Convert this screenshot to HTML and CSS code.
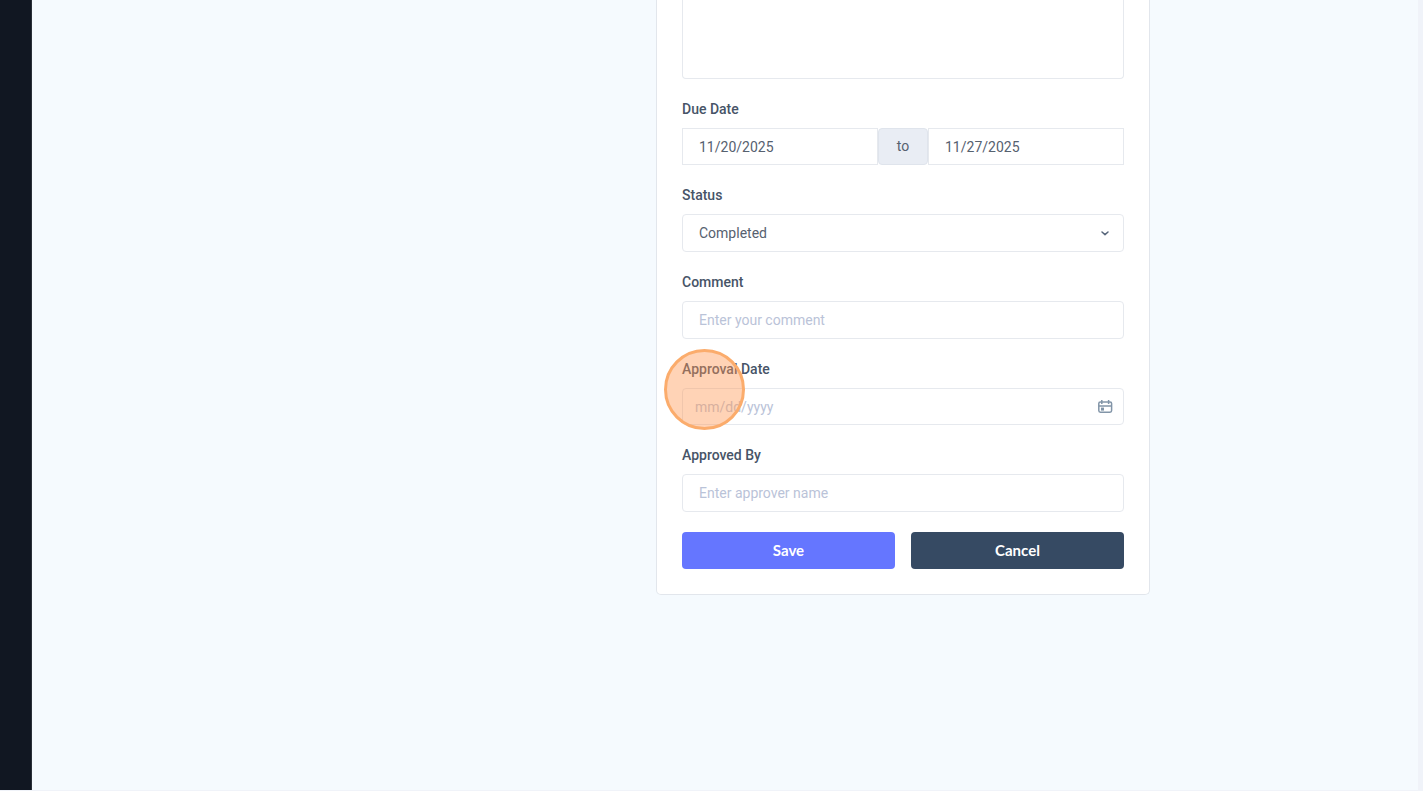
FILE: index.html
```html
<!DOCTYPE html>
<html lang="en">
<head>
  <meta charset="UTF-8">
  <meta name="viewport" content="width=device-width, initial-scale=1">
  <title>Edit Task</title>
  <link rel="stylesheet" href="styles.css">
</head>
<body>
  <div class="layout">
    <aside class="sidebar"></aside>

    <main class="content">
      <form class="card">
        <textarea class="control description" aria-label="Description"></textarea>

        <div class="field">
          <label for="startDate">Due Date</label>
          <div class="date-range">
            <input class="control" type="text" id="startDate" value="11/20/2025">
            <span class="range-text">to</span>
            <input class="control" type="text" id="endDate" value="11/27/2025" aria-label="End date">
          </div>
        </div>

        <div class="field">
          <label for="status">Status</label>
          <div class="control-wrap">
            <select class="control tall" id="status">
              <option>Completed</option>
            </select>
            <svg class="icon" viewBox="0 0 16 16" fill="none" stroke="#56657a" stroke-width="1.5" stroke-linecap="round" stroke-linejoin="round">
              <path d="M5 7l3 2.6L11 7"/>
            </svg>
          </div>
        </div>

        <div class="field">
          <label for="comment">Comment</label>
          <input class="control tall" type="text" id="comment" placeholder="Enter your comment">
        </div>

        <div class="field highlighted">
          <label for="approvalDate">Approval Date</label>
          <div class="control-wrap">
            <input class="control date-input" type="text" id="approvalDate" placeholder="mm/dd/yyyy">
            <svg class="icon" viewBox="0 0 16 16" fill="none" stroke="#8295a8" stroke-width="1.5" stroke-linejoin="round">
              <rect x="1.8" y="3" width="12.8" height="10.2" rx="1.6"/>
              <path d="M1.8 7h12.8M4.8 1v4M11.6 1v4"/>
              <rect x="4" y="8.6" width="3" height="3" fill="#8295a8" stroke="none"/>
            </svg>
          </div>
          <span class="click-marker"></span>
        </div>

        <div class="field">
          <label for="approvedBy">Approved By</label>
          <input class="control tall" type="text" id="approvedBy" placeholder="Enter approver name">
        </div>

        <div class="actions">
          <button type="button" class="btn btn-save">Save</button>
          <button type="button" class="btn btn-cancel">Cancel</button>
        </div>
      </form>
    </main>
  </div>
</body>
</html>
```
FILE: styles.css
```css
* {
  box-sizing: border-box;
}
body {
  margin: 0;
  font-family: Roboto, "Liberation Sans", sans-serif;
  font-size: 14px;
  color: #56616f;
  background: #f0f3f9;
}
.layout {
  display: flex;
  min-height: 100vh;
  padding: 0 5px 1px 0;
}
.sidebar {
  width: 32px;
  background: #111722;
  border-right: 1px solid #2a3039;
}
.content {
  flex: 1;
  display: grid;
  grid-template-columns: 624fr 494fr 268fr;
  align-items: start;
  background: #f5fafe;
}

/* form card */
.card {
  grid-column: 2;
  display: flex;
  flex-direction: column;
  gap: 20px;
  padding: 0 25px 25px;
  background: #fff;
  border: 1px solid #e2e6ec;
  border-top: 0;
  border-radius: 0 0 5px 5px;
}
.field {
  display: flex;
  flex-direction: column;
  gap: 8px;
}
.field label {
  line-height: 21px;
  font-weight: 500;
  color: #475467;
}
.control {
  width: 100%;
  height: 37px;
  padding: 0 16px;
  font-family: inherit;
  font-size: 14px;
  color: #56616f;
  background: #fff;
  border: 1px solid #e6e9ee;
  border-radius: 4px;
  outline: none;
}
.control::placeholder {
  color: #bac3d8;
}
.tall {
  height: 38px;
}
.description {
  display: block;
  height: 79px;
  border-top: 0;
  border-radius: 0 0 4px 4px;
  resize: none;
}

/* due date */
.date-range {
  display: flex;
}
.date-range .control {
  flex: 1;
  min-width: 0;
  border-radius: 0;
}
.range-text {
  display: flex;
  justify-content: center;
  width: 50px;
  line-height: 34px;
  background: #e9edf4;
  border: 1px solid #dfe4ec;
  border-radius: 4px;
}

/* fields with an icon */
.control-wrap {
  position: relative;
  display: flex;
}
select.control {
  appearance: none;
}
.date-input {
  padding: 0 12px;
}
.icon {
  position: absolute;
  top: 0;
  bottom: 0;
  right: 11px;
  width: 16px;
  height: 16px;
  margin: auto 0;
  pointer-events: none;
}
.highlighted {
  position: relative;
}
.click-marker {
  position: absolute;
  top: -10px;
  left: -18px;
  width: 81px;
  height: 81px;
  background: rgba(255, 150, 80, 0.42);
  border: 3px solid #fbac6c;
  border-radius: 50%;
  pointer-events: none;
}

.actions {
  display: grid;
  grid-template-columns: 1fr 1fr;
  gap: 16px;
}
.btn {
  height: 37px;
  padding: 0 16px 2px;
  font-family: Lato, "Open Sans", sans-serif;
  font-size: 15px;
  font-weight: 700;
  color: #fff;
  border: 0;
  border-radius: 4px;
  cursor: pointer;
}
.btn-save {
  background: #6576ff;
}
.btn-cancel {
  background: #364a63;
}
```
